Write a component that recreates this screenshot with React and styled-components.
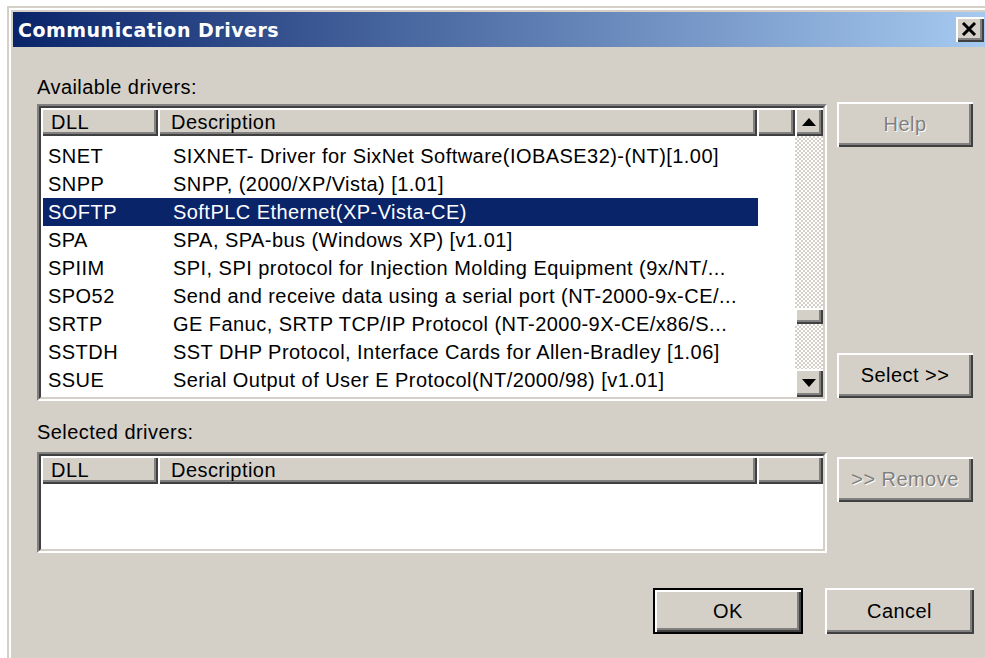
import styled, { createGlobalStyle, css } from "styled-components";

const GlobalStyle = createGlobalStyle`
  html, body {
    margin: 0;
    background: #fff;
    overflow: hidden;
  }
  body {
    font-family: "Liberation Sans", Arial, sans-serif;
  }
`;

const drivers = [
  { dll: "SNET", desc: "SIXNET- Driver for SixNet Software(IOBASE32)-(NT)[1.00]" },
  { dll: "SNPP", desc: "SNPP, (2000/XP/Vista) [1.01]" },
  { dll: "SOFTP", desc: "SoftPLC Ethernet(XP-Vista-CE)" },
  { dll: "SPA", desc: "SPA, SPA-bus (Windows XP) [v1.01]" },
  { dll: "SPIIM", desc: "SPI, SPI protocol for Injection Molding Equipment (9x/NT/..." },
  { dll: "SPO52", desc: "Send and receive data using a serial port (NT-2000-9x-CE/..." },
  { dll: "SRTP", desc: "GE Fanuc, SRTP TCP/IP Protocol (NT-2000-9X-CE/x86/S..." },
  { dll: "SSTDH", desc: "SST DHP Protocol, Interface Cards for Allen-Bradley [1.06]" },
  { dll: "SSUE", desc: "Serial Output of User E Protocol(NT/2000/98) [v1.01]" },
];

const SELECTED = "SOFTP";
const THUMB_OFFSET = 172;

const raised = css`
  background: #d4d0c8;
  box-shadow: inset 2px 2px #fff, inset -2px -2px #404040, inset -4px -4px #808080;
`;

const uiText = css`
  font-family: "Liberation Sans", Arial, sans-serif;
  font-size: 20px;
  letter-spacing: 0.45px;
`;

function ColumnHeader() {
  return (
    <Header>
      <HeaderCell $width={117} $pad={10}>DLL</HeaderCell>
      <HeaderCell $width={599} $pad={13}>Description</HeaderCell>
      <HeaderCell $fill />
    </Header>
  );
}

function App() {
  return (
    <>
      <GlobalStyle />
      <Window>
        <TitleBar>
          <Title>Communication Drivers</Title>
          <CloseButton>
            <svg width="16" height="14" viewBox="0 0 16 14">
              <path d="M2 1 L14 13 M14 1 L2 13" stroke="#000" strokeWidth="3" />
            </svg>
          </CloseButton>
        </TitleBar>
        <Content>
          <Label>Available drivers:</Label>
          <Panel>
            <ListBox $height={297}>
              <ListInner>
                <ListMain>
                  <ColumnHeader />
                  <Rows>
                    {drivers.map((d) => (
                      <Row key={d.dll} $selected={d.dll === SELECTED}>
                        <DllCell>{d.dll}</DllCell>
                        <DescCell>{d.desc}</DescCell>
                      </Row>
                    ))}
                  </Rows>
                </ListMain>
                <ScrollBar>
                  <ScrollButton>
                    <svg width="14" height="8" viewBox="0 0 14 8">
                      <polygon points="7,0 14,8 0,8" fill="#000" />
                    </svg>
                  </ScrollButton>
                  <Track>
                    <Thumb $offset={THUMB_OFFSET} />
                  </Track>
                  <ScrollButton>
                    <svg width="14" height="8" viewBox="0 0 14 8">
                      <polygon points="0,0 14,0 7,8" fill="#000" />
                    </svg>
                  </ScrollButton>
                </ScrollBar>
              </ListInner>
            </ListBox>
            <ButtonColumn>
              <Button disabled>Help</Button>
              <Button>Select &gt;&gt;</Button>
            </ButtonColumn>
          </Panel>

          <Label $gap={19}>Selected drivers:</Label>
          <Panel>
            <ListBox $height={101}>
              <ListInner>
                <ListMain>
                  <ColumnHeader />
                </ListMain>
              </ListInner>
            </ListBox>
            <RemoveButton disabled>&gt;&gt; Remove</RemoveButton>
          </Panel>

          <Footer>
            <DefaultButton $width={150}>OK</DefaultButton>
            <FooterButton $width={149}>Cancel</FooterButton>
          </Footer>
        </Content>
      </Window>
    </>
  );
}

export default App;

const Window = styled.div`
  box-sizing: border-box;
  margin: 6px 0 0 7px;
  width: 987px;
  height: 652px;
  padding: 4px 4px 0 4px;
  background: #d4d0c8;
  border: 2px solid;
  border-bottom: 0;
  border-color: #d4d0c8 #404040 #404040 #d4d0c8;
  box-shadow: inset 2px 2px #fff, inset -2px 0 #808080;
`;

const TitleBar = styled.div`
  display: flex;
  align-items: center;
  justify-content: space-between;
  height: 35px;
  padding: 0 4px 0 5px;
  background: linear-gradient(90deg, #0a246a, #a6caf0);
`;

const Title = styled.span`
  color: #fff;
  font-family: "DejaVu Sans", Verdana, sans-serif;
  font-weight: bold;
  font-size: 19px;
  letter-spacing: 0.5px;
`;

const CloseButton = styled.div`
  ${raised};
  width: 28px;
  height: 25px;
  display: flex;
  align-items: center;
  justify-content: center;
  box-sizing: border-box;
  padding: 0 2px 2px 0;
`;

const Content = styled.div`
  padding: 28px 0 0 24px;
`;

const Label = styled.div`
  ${uiText};
  line-height: 24px;
  color: #000;
  margin-top: ${(p) => p.$gap || 0}px;
  margin-bottom: ${(p) => (p.$gap ? 8 : 5)}px;
`;

const Panel = styled.div`
  display: flex;
  align-items: flex-start;
  gap: 10px;
`;

const ListBox = styled.div`
  box-sizing: border-box;
  width: 790px;
  height: ${(p) => p.$height}px;
  border: 2px solid;
  border-color: #808080 #fff #fff #808080;
`;

const ListInner = styled.div`
  box-sizing: border-box;
  height: 100%;
  display: flex;
  background: #fff;
  border: 2px solid;
  border-color: #404040 #d4d0c8 #d4d0c8 #404040;
`;

const ListMain = styled.div`
  flex: 1;
  min-width: 0;
  display: flex;
  flex-direction: column;
`;

const Header = styled.div`
  display: flex;
  height: 28px;
`;

const HeaderCell = styled.div`
  ${raised};
  ${uiText};
  box-sizing: border-box;
  width: ${(p) => (p.$fill ? "auto" : `${p.$width}px`)};
  flex: ${(p) => (p.$fill ? 1 : "none")};
  padding-left: ${(p) => p.$pad || 0}px;
  line-height: 29px;
  color: #000;
  white-space: nowrap;
`;

const Rows = styled.div`
  padding-top: 6px;
`;

const Row = styled.div`
  ${uiText};
  display: flex;
  width: 715px;
  height: 28px;
  margin-left: 2px;
  line-height: 29px;
  white-space: nowrap;
  background: ${(p) => (p.$selected ? "#0a246a" : "transparent")};
  color: ${(p) => (p.$selected ? "#fff" : "#000")};
`;

const DllCell = styled.div`
  width: 115px;
  padding-left: 5px;
  box-sizing: border-box;
`;

const DescCell = styled.div`
  flex: 1;
  padding-left: 15px;
  overflow: hidden;
`;

const ScrollBar = styled.div`
  width: 28px;
  display: flex;
  flex-direction: column;
`;

const ScrollButton = styled.div`
  ${raised};
  height: 28px;
  flex: none;
  display: flex;
  align-items: center;
  justify-content: center;
`;

const Track = styled.div`
  flex: 1;
  background-color: #fff;
  background-image: repeating-conic-gradient(#d4d0c8 0 25%, #fff 0 50%);
  background-size: 4px 4px;
`;

const Thumb = styled.div`
  ${raised};
  height: 16px;
  margin-top: ${(p) => p.$offset}px;
`;

const ButtonColumn = styled.div`
  display: flex;
  flex-direction: column;
  justify-content: space-between;
  height: 296px;
  margin-top: -2px;
`;

const Button = styled.button`
  ${raised};
  ${uiText};
  box-sizing: border-box;
  width: ${(p) => p.$width || 136}px;
  height: 45px;
  border: none;
  padding: 0;
  color: #000;

  &:disabled {
    color: #808080;
    text-shadow: 1px 1px #fff;
  }
`;

const RemoveButton = styled(Button)`
  margin-top: 5px;
`;

const Footer = styled.div`
  display: flex;
  justify-content: flex-end;
  gap: 22px;
  width: 937px;
  margin-top: 35px;
`;

const FooterButton = styled(Button)`
  height: 46px;
`;

const DefaultButton = styled(FooterButton)`
  border: 2px solid #000;
`;
